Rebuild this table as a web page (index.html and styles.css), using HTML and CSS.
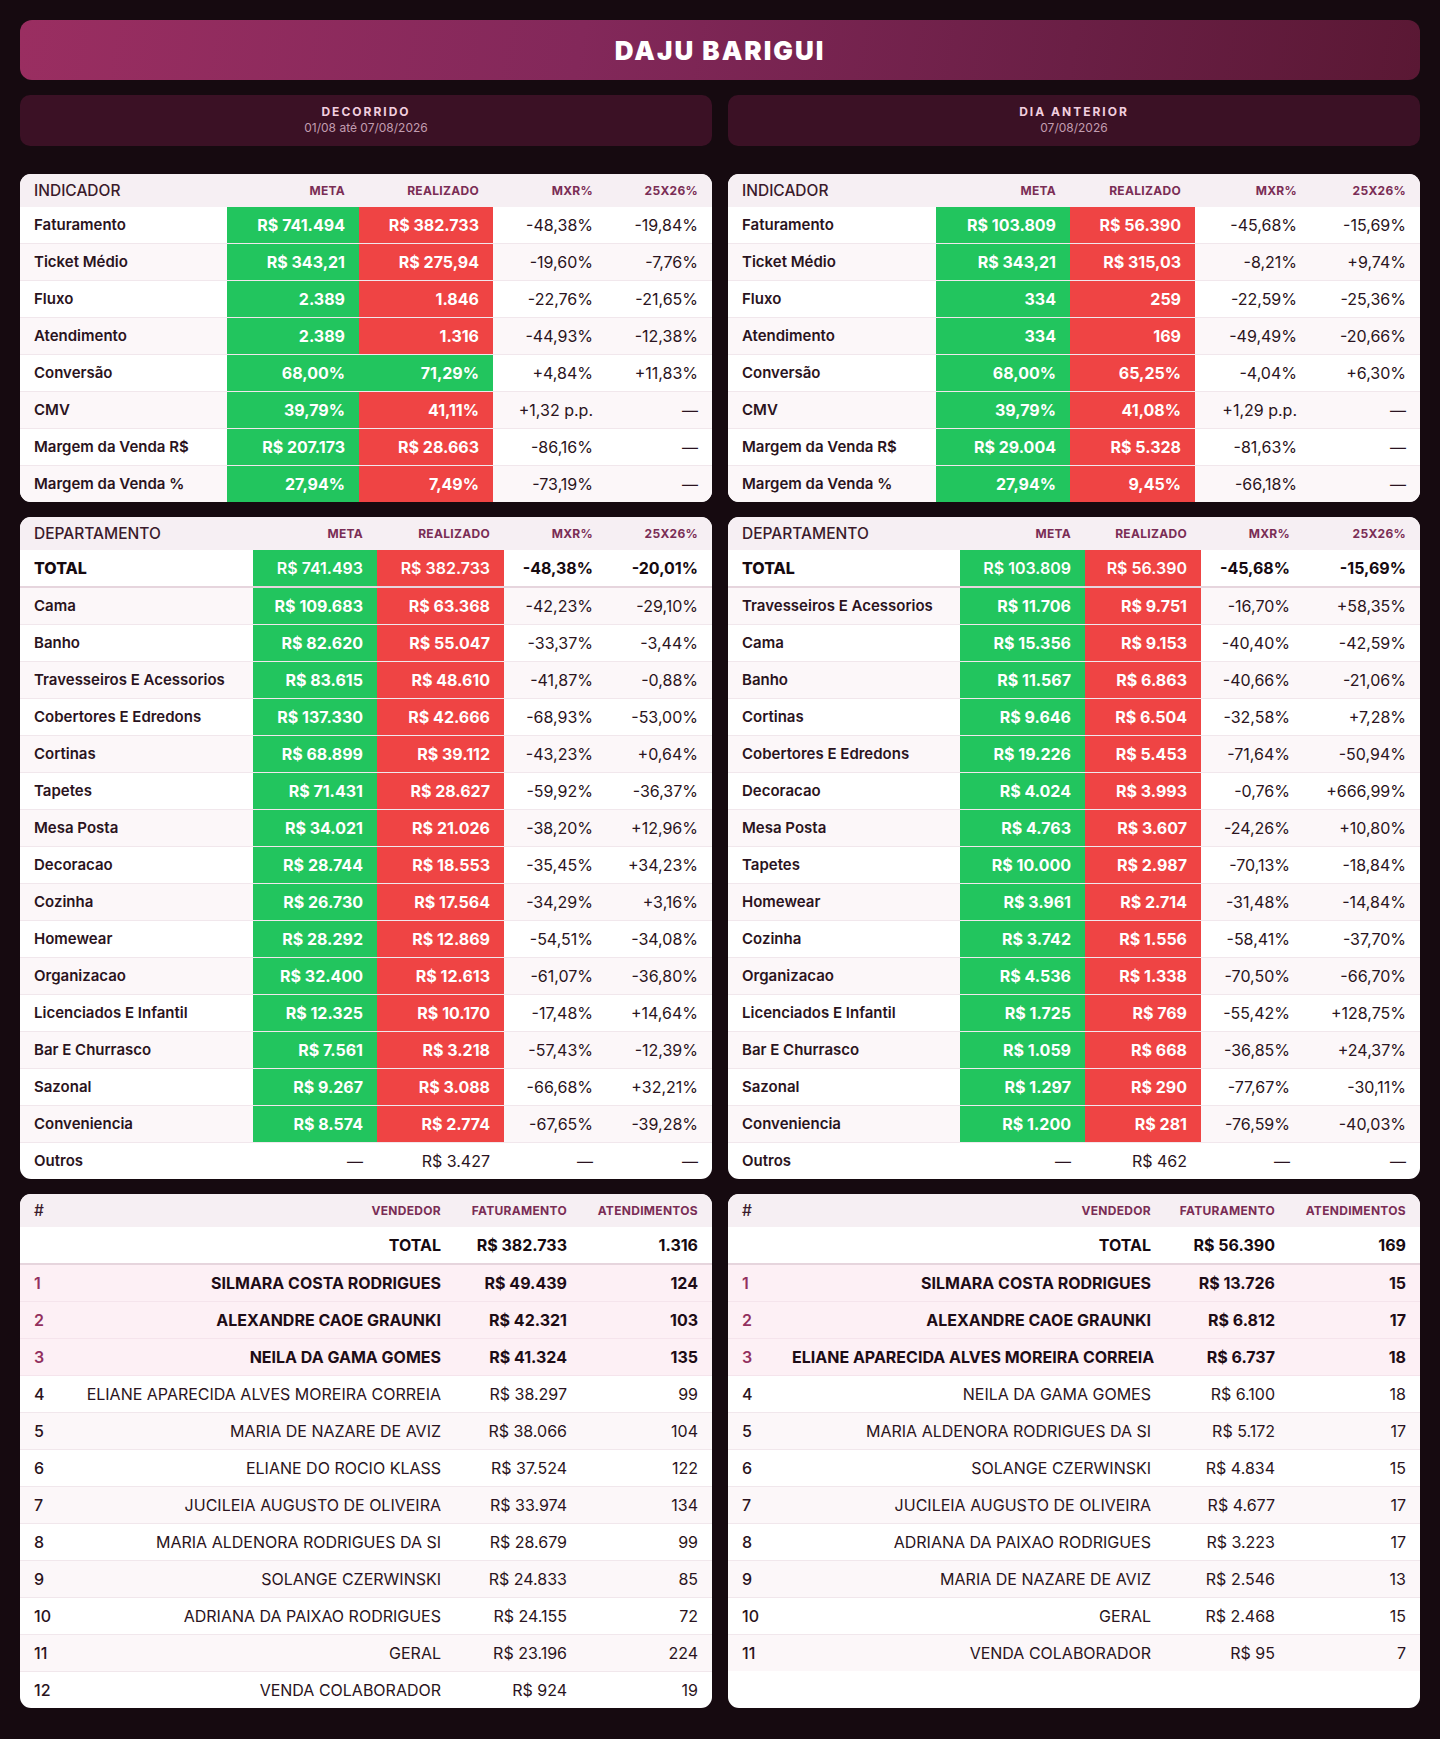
FILE: index.html
```html
<!DOCTYPE html>
<html lang="pt-BR">
<head>
<meta charset="utf-8">
<title>DAJU BARIGUI</title>
<link rel="stylesheet" href="styles.css">
</head>
<body>
<main class="page">
  <header class="title">DAJU BARIGUI</header>

  <section class="grid periods">
    <div class="period">
      <div class="period-name">DECORRIDO</div>
      <div class="period-date">01/08 até 07/08/2026</div>
    </div>
    <div class="period">
      <div class="period-name">DIA ANTERIOR</div>
      <div class="period-date">07/08/2026</div>
    </div>
  </section>

  <section class="grid">
    <div class="card">
      <table class="tbl ind">
        <colgroup><col><col class="c-meta"><col class="c-real"><col class="c-mxr"><col class="c-yoy"></colgroup>
        <thead><tr><th class="first">INDICADOR</th><th>META</th><th>REALIZADO</th><th>MXR%</th><th>25X26%</th></tr></thead>
        <tbody>
          <tr><td class="lbl">Faturamento</td><td class="g">R$ 741.494</td><td class="r">R$ 382.733</td><td>-48,38%</td><td>-19,84%</td></tr>
          <tr><td class="lbl">Ticket Médio</td><td class="g">R$ 343,21</td><td class="r">R$ 275,94</td><td>-19,60%</td><td>-7,76%</td></tr>
          <tr><td class="lbl">Fluxo</td><td class="g">2.389</td><td class="r">1.846</td><td>-22,76%</td><td>-21,65%</td></tr>
          <tr><td class="lbl">Atendimento</td><td class="g">2.389</td><td class="r">1.316</td><td>-44,93%</td><td>-12,38%</td></tr>
          <tr><td class="lbl">Conversão</td><td class="g">68,00%</td><td class="g">71,29%</td><td>+4,84%</td><td>+11,83%</td></tr>
          <tr><td class="lbl">CMV</td><td class="g">39,79%</td><td class="r">41,11%</td><td>+1,32 p.p.</td><td>—</td></tr>
          <tr><td class="lbl">Margem da Venda R$</td><td class="g">R$ 207.173</td><td class="r">R$ 28.663</td><td>-86,16%</td><td>—</td></tr>
          <tr><td class="lbl">Margem da Venda %</td><td class="g">27,94%</td><td class="r">7,49%</td><td>-73,19%</td><td>—</td></tr>
        </tbody>
      </table>
    </div>
    <div class="card">
      <table class="tbl ind ind-r">
        <colgroup><col><col class="c-meta"><col class="c-real"><col class="c-mxr"><col class="c-yoy"></colgroup>
        <thead><tr><th class="first">INDICADOR</th><th>META</th><th>REALIZADO</th><th>MXR%</th><th>25X26%</th></tr></thead>
        <tbody>
          <tr><td class="lbl">Faturamento</td><td class="g">R$ 103.809</td><td class="r">R$ 56.390</td><td>-45,68%</td><td>-15,69%</td></tr>
          <tr><td class="lbl">Ticket Médio</td><td class="g">R$ 343,21</td><td class="r">R$ 315,03</td><td>-8,21%</td><td>+9,74%</td></tr>
          <tr><td class="lbl">Fluxo</td><td class="g">334</td><td class="r">259</td><td>-22,59%</td><td>-25,36%</td></tr>
          <tr><td class="lbl">Atendimento</td><td class="g">334</td><td class="r">169</td><td>-49,49%</td><td>-20,66%</td></tr>
          <tr><td class="lbl">Conversão</td><td class="g">68,00%</td><td class="r">65,25%</td><td>-4,04%</td><td>+6,30%</td></tr>
          <tr><td class="lbl">CMV</td><td class="g">39,79%</td><td class="r">41,08%</td><td>+1,29 p.p.</td><td>—</td></tr>
          <tr><td class="lbl">Margem da Venda R$</td><td class="g">R$ 29.004</td><td class="r">R$ 5.328</td><td>-81,63%</td><td>—</td></tr>
          <tr><td class="lbl">Margem da Venda %</td><td class="g">27,94%</td><td class="r">9,45%</td><td>-66,18%</td><td>—</td></tr>
        </tbody>
      </table>
    </div>
  </section>

  <section class="grid">
    <div class="card">
      <table class="tbl dep">
        <colgroup><col><col class="c-meta"><col class="c-real"><col class="c-mxr"><col class="c-yoy"></colgroup>
        <thead><tr><th class="first">DEPARTAMENTO</th><th>META</th><th>REALIZADO</th><th>MXR%</th><th>25X26%</th></tr></thead>
        <tbody>
          <tr class="total"><td class="lbl">TOTAL</td><td class="g">R$ 741.493</td><td class="r">R$ 382.733</td><td>-48,38%</td><td>-20,01%</td></tr>
          <tr><td class="lbl">Cama</td><td class="g">R$ 109.683</td><td class="r">R$ 63.368</td><td>-42,23%</td><td>-29,10%</td></tr>
          <tr><td class="lbl">Banho</td><td class="g">R$ 82.620</td><td class="r">R$ 55.047</td><td>-33,37%</td><td>-3,44%</td></tr>
          <tr><td class="lbl">Travesseiros E Acessorios</td><td class="g">R$ 83.615</td><td class="r">R$ 48.610</td><td>-41,87%</td><td>-0,88%</td></tr>
          <tr><td class="lbl">Cobertores E Edredons</td><td class="g">R$ 137.330</td><td class="r">R$ 42.666</td><td>-68,93%</td><td>-53,00%</td></tr>
          <tr><td class="lbl">Cortinas</td><td class="g">R$ 68.899</td><td class="r">R$ 39.112</td><td>-43,23%</td><td>+0,64%</td></tr>
          <tr><td class="lbl">Tapetes</td><td class="g">R$ 71.431</td><td class="r">R$ 28.627</td><td>-59,92%</td><td>-36,37%</td></tr>
          <tr><td class="lbl">Mesa Posta</td><td class="g">R$ 34.021</td><td class="r">R$ 21.026</td><td>-38,20%</td><td>+12,96%</td></tr>
          <tr><td class="lbl">Decoracao</td><td class="g">R$ 28.744</td><td class="r">R$ 18.553</td><td>-35,45%</td><td>+34,23%</td></tr>
          <tr><td class="lbl">Cozinha</td><td class="g">R$ 26.730</td><td class="r">R$ 17.564</td><td>-34,29%</td><td>+3,16%</td></tr>
          <tr><td class="lbl">Homewear</td><td class="g">R$ 28.292</td><td class="r">R$ 12.869</td><td>-54,51%</td><td>-34,08%</td></tr>
          <tr><td class="lbl">Organizacao</td><td class="g">R$ 32.400</td><td class="r">R$ 12.613</td><td>-61,07%</td><td>-36,80%</td></tr>
          <tr><td class="lbl">Licenciados E Infantil</td><td class="g">R$ 12.325</td><td class="r">R$ 10.170</td><td>-17,48%</td><td>+14,64%</td></tr>
          <tr><td class="lbl">Bar E Churrasco</td><td class="g">R$ 7.561</td><td class="r">R$ 3.218</td><td>-57,43%</td><td>-12,39%</td></tr>
          <tr><td class="lbl">Sazonal</td><td class="g">R$ 9.267</td><td class="r">R$ 3.088</td><td>-66,68%</td><td>+32,21%</td></tr>
          <tr><td class="lbl">Conveniencia</td><td class="g">R$ 8.574</td><td class="r">R$ 2.774</td><td>-67,65%</td><td>-39,28%</td></tr>
          <tr><td class="lbl">Outros</td><td>—</td><td>R$ 3.427</td><td>—</td><td>—</td></tr>
        </tbody>
      </table>
    </div>
    <div class="card">
      <table class="tbl dep dep-r">
        <colgroup><col><col class="c-meta"><col class="c-real"><col class="c-mxr"><col class="c-yoy"></colgroup>
        <thead><tr><th class="first">DEPARTAMENTO</th><th>META</th><th>REALIZADO</th><th>MXR%</th><th>25X26%</th></tr></thead>
        <tbody>
          <tr class="total"><td class="lbl">TOTAL</td><td class="g">R$ 103.809</td><td class="r">R$ 56.390</td><td>-45,68%</td><td>-15,69%</td></tr>
          <tr><td class="lbl">Travesseiros E Acessorios</td><td class="g">R$ 11.706</td><td class="r">R$ 9.751</td><td>-16,70%</td><td>+58,35%</td></tr>
          <tr><td class="lbl">Cama</td><td class="g">R$ 15.356</td><td class="r">R$ 9.153</td><td>-40,40%</td><td>-42,59%</td></tr>
          <tr><td class="lbl">Banho</td><td class="g">R$ 11.567</td><td class="r">R$ 6.863</td><td>-40,66%</td><td>-21,06%</td></tr>
          <tr><td class="lbl">Cortinas</td><td class="g">R$ 9.646</td><td class="r">R$ 6.504</td><td>-32,58%</td><td>+7,28%</td></tr>
          <tr><td class="lbl">Cobertores E Edredons</td><td class="g">R$ 19.226</td><td class="r">R$ 5.453</td><td>-71,64%</td><td>-50,94%</td></tr>
          <tr><td class="lbl">Decoracao</td><td class="g">R$ 4.024</td><td class="r">R$ 3.993</td><td>-0,76%</td><td>+666,99%</td></tr>
          <tr><td class="lbl">Mesa Posta</td><td class="g">R$ 4.763</td><td class="r">R$ 3.607</td><td>-24,26%</td><td>+10,80%</td></tr>
          <tr><td class="lbl">Tapetes</td><td class="g">R$ 10.000</td><td class="r">R$ 2.987</td><td>-70,13%</td><td>-18,84%</td></tr>
          <tr><td class="lbl">Homewear</td><td class="g">R$ 3.961</td><td class="r">R$ 2.714</td><td>-31,48%</td><td>-14,84%</td></tr>
          <tr><td class="lbl">Cozinha</td><td class="g">R$ 3.742</td><td class="r">R$ 1.556</td><td>-58,41%</td><td>-37,70%</td></tr>
          <tr><td class="lbl">Organizacao</td><td class="g">R$ 4.536</td><td class="r">R$ 1.338</td><td>-70,50%</td><td>-66,70%</td></tr>
          <tr><td class="lbl">Licenciados E Infantil</td><td class="g">R$ 1.725</td><td class="r">R$ 769</td><td>-55,42%</td><td>+128,75%</td></tr>
          <tr><td class="lbl">Bar E Churrasco</td><td class="g">R$ 1.059</td><td class="r">R$ 668</td><td>-36,85%</td><td>+24,37%</td></tr>
          <tr><td class="lbl">Sazonal</td><td class="g">R$ 1.297</td><td class="r">R$ 290</td><td>-77,67%</td><td>-30,11%</td></tr>
          <tr><td class="lbl">Conveniencia</td><td class="g">R$ 1.200</td><td class="r">R$ 281</td><td>-76,59%</td><td>-40,03%</td></tr>
          <tr><td class="lbl">Outros</td><td>—</td><td>R$ 462</td><td>—</td><td>—</td></tr>
        </tbody>
      </table>
    </div>
  </section>

  <section class="grid">
    <div class="card">
      <table class="tbl ven">
        <colgroup><col class="c-rank"><col><col class="c-fat"><col class="c-at"></colgroup>
        <thead><tr><th class="first">#</th><th>VENDEDOR</th><th>FATURAMENTO</th><th>ATENDIMENTOS</th></tr></thead>
        <tbody>
          <tr class="total"><td></td><td>TOTAL</td><td>R$ 382.733</td><td>1.316</td></tr>
          <tr class="top"><td class="rank">1</td><td>SILMARA COSTA RODRIGUES</td><td>R$ 49.439</td><td>124</td></tr>
          <tr class="top"><td class="rank">2</td><td>ALEXANDRE CAOE GRAUNKI</td><td>R$ 42.321</td><td>103</td></tr>
          <tr class="top"><td class="rank">3</td><td>NEILA DA GAMA GOMES</td><td>R$ 41.324</td><td>135</td></tr>
          <tr><td class="rank">4</td><td>ELIANE APARECIDA ALVES MOREIRA CORREIA</td><td>R$ 38.297</td><td>99</td></tr>
          <tr><td class="rank">5</td><td>MARIA DE NAZARE DE AVIZ</td><td>R$ 38.066</td><td>104</td></tr>
          <tr><td class="rank">6</td><td>ELIANE DO ROCIO KLASS</td><td>R$ 37.524</td><td>122</td></tr>
          <tr><td class="rank">7</td><td>JUCILEIA AUGUSTO DE OLIVEIRA</td><td>R$ 33.974</td><td>134</td></tr>
          <tr><td class="rank">8</td><td>MARIA ALDENORA RODRIGUES DA SI</td><td>R$ 28.679</td><td>99</td></tr>
          <tr><td class="rank">9</td><td>SOLANGE CZERWINSKI</td><td>R$ 24.833</td><td>85</td></tr>
          <tr><td class="rank">10</td><td>ADRIANA DA PAIXAO RODRIGUES</td><td>R$ 24.155</td><td>72</td></tr>
          <tr><td class="rank">11</td><td>GERAL</td><td>R$ 23.196</td><td>224</td></tr>
          <tr><td class="rank">12</td><td>VENDA COLABORADOR</td><td>R$ 924</td><td>19</td></tr>
        </tbody>
      </table>
    </div>
    <div class="card">
      <table class="tbl ven ven-r">
        <colgroup><col class="c-rank"><col><col class="c-fat"><col class="c-at"></colgroup>
        <thead><tr><th class="first">#</th><th>VENDEDOR</th><th>FATURAMENTO</th><th>ATENDIMENTOS</th></tr></thead>
        <tbody>
          <tr class="total"><td></td><td>TOTAL</td><td>R$ 56.390</td><td>169</td></tr>
          <tr class="top"><td class="rank">1</td><td>SILMARA COSTA RODRIGUES</td><td>R$ 13.726</td><td>15</td></tr>
          <tr class="top"><td class="rank">2</td><td>ALEXANDRE CAOE GRAUNKI</td><td>R$ 6.812</td><td>17</td></tr>
          <tr class="top"><td class="rank">3</td><td>ELIANE APARECIDA ALVES MOREIRA CORREIA</td><td>R$ 6.737</td><td>18</td></tr>
          <tr><td class="rank">4</td><td>NEILA DA GAMA GOMES</td><td>R$ 6.100</td><td>18</td></tr>
          <tr><td class="rank">5</td><td>MARIA ALDENORA RODRIGUES DA SI</td><td>R$ 5.172</td><td>17</td></tr>
          <tr><td class="rank">6</td><td>SOLANGE CZERWINSKI</td><td>R$ 4.834</td><td>15</td></tr>
          <tr><td class="rank">7</td><td>JUCILEIA AUGUSTO DE OLIVEIRA</td><td>R$ 4.677</td><td>17</td></tr>
          <tr><td class="rank">8</td><td>ADRIANA DA PAIXAO RODRIGUES</td><td>R$ 3.223</td><td>17</td></tr>
          <tr><td class="rank">9</td><td>MARIA DE NAZARE DE AVIZ</td><td>R$ 2.546</td><td>13</td></tr>
          <tr><td class="rank">10</td><td>GERAL</td><td>R$ 2.468</td><td>15</td></tr>
          <tr><td class="rank">11</td><td>VENDA COLABORADOR</td><td>R$ 95</td><td>7</td></tr>
        </tbody>
      </table>
    </div>
  </section>
</main>
</body>
</html>
```

FILE: styles.css
```css
* { box-sizing: border-box; }

html, body {
  margin: 0;
  padding: 0;
  background: #160a10;
}

body {
  font-family: Inter, "Noto Sans", "Liberation Sans", sans-serif;
  color: #2a1320;
}

.page {
  display: flex;
  flex-direction: column;
  gap: 15px;
  padding: 20px 20px 33px;
}

.title {
  height: 60px;
  border-radius: 12px;
  background: linear-gradient(100deg, #9a2e61 0%, #83285a 40%, #6a1f45 75%, #5a1834 100%);
  color: #ffffff;
  font-weight: 900;
  font-size: 26px;
  letter-spacing: 2px;
  display: flex;
  align-items: center;
  justify-content: center;
}

.grid {
  display: grid;
  grid-template-columns: 1fr 1fr;
  gap: 15px 16px;
}

.periods {
  margin-bottom: 13px;
}

.period {
  background: #3b1125;
  border-radius: 10px;
  padding: 9px 0 10px;
  text-align: center;
}

.period-name {
  color: #f1cfdf;
  font-size: 12px;
  font-weight: 700;
  letter-spacing: 2px;
  line-height: 16px;
}

.period-date {
  color: #c29db0;
  font-size: 12px;
  line-height: 16px;
}

.card {
  background: #ffffff;
  border-radius: 11px;
  overflow: hidden;
}

.tbl {
  width: 100%;
  border-collapse: collapse;
  table-layout: fixed;
}

.tbl th {
  background: #f6eff3;
  color: #7a2d55;
  font-size: 12px;
  font-weight: 700;
  letter-spacing: 0.3px;
  text-align: right;
  line-height: 17px;
  padding: 8px 14px;
  white-space: nowrap;
}

.tbl th.first {
  text-align: left;
  color: #3a1a2b;
  font-size: 15.5px;
  font-weight: 500;
  letter-spacing: 0;
}

.tbl td {
  font-size: 16px;
  line-height: 20px;
  padding: 8px 14px;
  text-align: right;
  white-space: nowrap;
  border-bottom: 1px solid #f1e7ec;
}

.tbl tbody tr:nth-child(even) td {
  background: #fcf7f9;
}

.tbl tbody tr:last-child td {
  border-bottom: none;
}

.tbl td.lbl {
  text-align: left;
  font-size: 15px;
  font-weight: 600;
  color: #2a1320;
}

.tbl td.g,
.tbl tbody tr:nth-child(even) td.g {
  background: #22c55e;
  color: #ffffff;
  font-weight: 700;
}

.tbl td.r,
.tbl tbody tr:nth-child(even) td.r {
  background: #ef4444;
  color: #ffffff;
  font-weight: 700;
}

.tbl tr.total td {
  font-weight: 700;
  color: #160a10;
  border-bottom: 2px solid #e6d5dd;
}

.tbl tr.total td.lbl {
  font-size: 16px;
  font-weight: 800;
  color: #160a10;
}

.tbl tr.total td.g,
.tbl tr.total td.r {
  color: #ffffff;
  font-weight: 600;
}

/* indicator tables */
.ind .c-meta { width: 132px; }
.ind .c-real { width: 134px; }
.ind .c-mxr { width: 114px; }
.ind .c-yoy { width: 105px; }

.ind-r .c-meta { width: 134px; }
.ind-r .c-real { width: 125px; }
.ind-r .c-mxr { width: 116px; }
.ind-r .c-yoy { width: 109px; }

/* department tables */
.dep .c-meta { width: 124px; }
.dep .c-real { width: 127px; }
.dep .c-mxr { width: 103px; }
.dep .c-yoy { width: 105px; }

.dep-r .c-meta { width: 125px; }
.dep-r .c-real { width: 116px; }
.dep-r .c-mxr { width: 103px; }
.dep-r .c-yoy { width: 116px; }

/* vendor tables */
.ven .c-rank { width: 50px; }
.ven .c-fat { width: 126px; }
.ven .c-at { width: 131px; }
.ven-r .c-fat { width: 124px; }

.ven td.rank {
  text-align: left;
  padding-right: 0;
  font-weight: 500;
}

.ven tr.top td {
  background: #fdf0f5;
  font-weight: 700;
  color: #1e0c16;
  border-bottom-color: #f5e4ec;
}

.ven tbody tr.top:nth-child(even) td {
  background: #fdf0f5;
}

.ven tr.top td.rank {
  color: #93305f;
  font-weight: 600;
}
```
